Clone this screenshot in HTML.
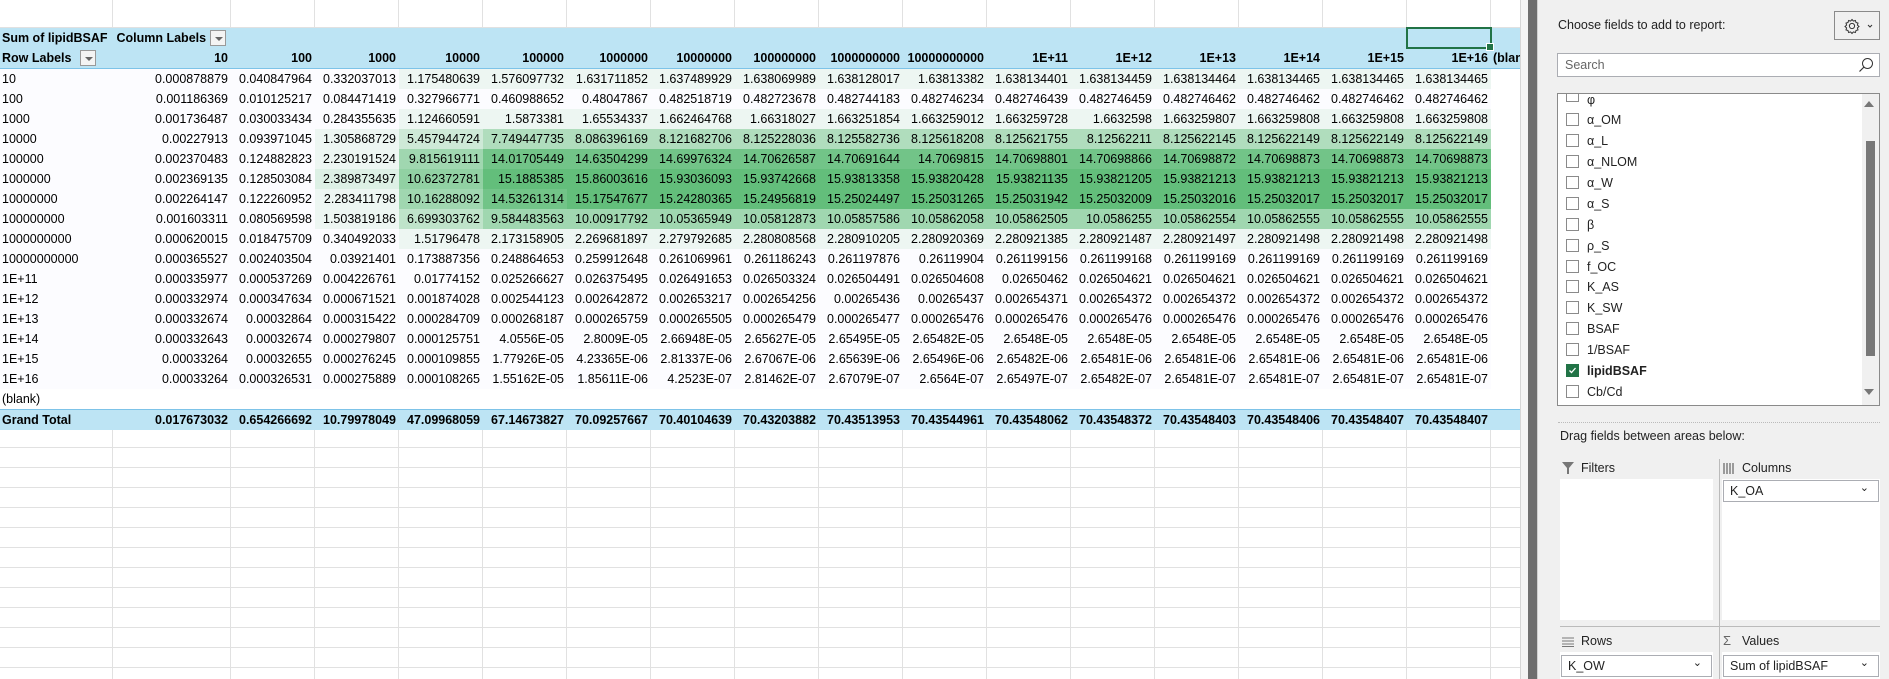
<!DOCTYPE html>
<html><head><meta charset="utf-8">
<style>
*{box-sizing:border-box;margin:0;padding:0}
body{width:1889px;height:679px;overflow:hidden;background:#fff;font-family:"Liberation Sans",sans-serif;position:relative}
#sheet{position:absolute;left:0;top:0;width:1520px;height:679px;overflow:hidden;
background-image:
linear-gradient(#e1e1e1,#e1e1e1),linear-gradient(#e1e1e1,#e1e1e1),
repeating-linear-gradient(90deg,transparent 0 83px,#e1e1e1 83px 84px),
repeating-linear-gradient(180deg,transparent 0 19px,#e1e1e1 19px 20px);
background-size:1px 100%,1px 100%,1289px 100%,100% 679px;
background-position:112px 0,230px 0,231px 0,0 8px;background-repeat:no-repeat,no-repeat,no-repeat,no-repeat}
table{position:absolute;left:0;top:28px;width:1531px;border-collapse:collapse;table-layout:fixed;font-size:12.5px;color:#000}
td{height:20px;padding:0 3px 0 2px;white-space:nowrap;overflow:hidden;text-align:right;background:#fcfcff;line-height:20px}
td:first-child{text-align:left}
tr.h td{background:#bde4f4;font-weight:bold}
tr.h2 td{border-bottom:1px solid #7dc3e8}
tr.bl td{background:#fff}
tr.gt td{background:#bde4f4;font-weight:bold;border-top:1px solid #7dc3e8}
td.w{background:#fff}
.g1{background:#edf6f2}.g2{background:#ddf0e5}.g3{background:#cee9d7}.g4{background:#bfe3ca}.g5{background:#b0ddbd}.g6{background:#a0d7b0}.g7{background:#91d1a3}.g8{background:#82ca95}.g9{background:#72c488}.g10{background:#63be7b}
.dd{display:inline-block;width:16px;height:16px;border:1px solid #999;background:#f4f4f4;vertical-align:middle;position:relative;top:-1px}
.dd:after{content:"";position:absolute;left:4px;top:6px;border-left:4px solid transparent;border-right:4px solid transparent;border-top:4px solid #666}
#sel{position:absolute;left:1406px;top:27px;width:86px;height:22px;border:2px solid #217346}
#sel:after{content:"";position:absolute;right:-4px;bottom:-4px;width:6px;height:6px;background:#217346;border:1px solid #fff}
#gap{position:absolute;left:1520px;top:0;width:8px;height:679px;background:#f3f3f3;border-left:1px solid #d5d5d5}
#bar{position:absolute;left:1528px;top:0;width:9px;height:679px;background:#6e6e6e}
#panel{position:absolute;left:1537px;top:0;width:352px;height:679px;background:#f0f0f0;font-size:12px;color:#222;border-left:1px solid #d0d0d0}
.ab{position:absolute}
.cb{position:absolute;left:8px;width:13px;height:13px;border:1px solid #8a8a8a;background:#fff}
.it{position:absolute;left:29px;font-size:12.5px}
.box{position:absolute;background:#fff;border:1px solid #abadb3}
.drop{position:absolute;background:#fff;border:1px solid #abadb3;height:22px;font-size:12.5px;line-height:20px;padding-left:6px}
.drop:after{content:"⌄";position:absolute;right:9px;top:-3px;font-size:11px}
</style></head><body>
<div id="sheet">
<table>
<colgroup><col style="width:113px"><col style="width:118px"><col span="15" style="width:84px"><col style="width:40px"></colgroup>
<tr class="h"><td>Sum of lipidBSAF</td><td style="text-align:left;padding-left:0;overflow:visible">&nbsp;Column Labels <span class="dd"></span></td><td></td><td></td><td></td><td></td><td></td><td></td><td></td><td></td><td></td><td></td><td></td><td></td><td></td><td></td><td></td><td></td></tr>
<tr class="h h2"><td>Row Labels <span class="dd" style="margin-left:5px"></span></td><td>10</td><td>100</td><td>1000</td><td>10000</td><td>100000</td><td>1000000</td><td>10000000</td><td>100000000</td><td>1000000000</td><td>10000000000</td><td>1E+11</td><td>1E+12</td><td>1E+13</td><td>1E+14</td><td>1E+15</td><td>1E+16</td><td style="text-align:left">(blank)</td></tr>
<tr><td>10</td><td>0.000878879</td><td>0.040847964</td><td>0.332037013</td><td class="g1">1.175480639</td><td class="g1">1.576097732</td><td class="g1">1.631711852</td><td class="g1">1.637489929</td><td class="g1">1.638069989</td><td class="g1">1.638128017</td><td class="g1">1.63813382</td><td class="g1">1.638134401</td><td class="g1">1.638134459</td><td class="g1">1.638134464</td><td class="g1">1.638134465</td><td class="g1">1.638134465</td><td class="g1">1.638134465</td><td class="w"></td></tr>
<tr><td>100</td><td>0.001186369</td><td>0.010125217</td><td>0.084471419</td><td>0.327966771</td><td>0.460988652</td><td>0.48047867</td><td>0.482518719</td><td>0.482723678</td><td>0.482744183</td><td>0.482746234</td><td>0.482746439</td><td>0.482746459</td><td>0.482746462</td><td>0.482746462</td><td>0.482746462</td><td>0.482746462</td><td class="w"></td></tr>
<tr><td>1000</td><td>0.001736487</td><td>0.030033434</td><td>0.284355635</td><td class="g1">1.124660591</td><td class="g1">1.5873381</td><td class="g1">1.65534337</td><td class="g1">1.662464768</td><td class="g1">1.66318027</td><td class="g1">1.663251854</td><td class="g1">1.663259012</td><td class="g1">1.663259728</td><td class="g1">1.6632598</td><td class="g1">1.663259807</td><td class="g1">1.663259808</td><td class="g1">1.663259808</td><td class="g1">1.663259808</td><td class="w"></td></tr>
<tr><td>10000</td><td>0.00227913</td><td>0.093971045</td><td class="g1">1.305868729</td><td class="g3">5.457944724</td><td class="g5">7.749447735</td><td class="g5">8.086396169</td><td class="g5">8.121682706</td><td class="g5">8.125228036</td><td class="g5">8.125582736</td><td class="g5">8.125618208</td><td class="g5">8.125621755</td><td class="g5">8.12562211</td><td class="g5">8.125622145</td><td class="g5">8.125622149</td><td class="g5">8.125622149</td><td class="g5">8.125622149</td><td class="w"></td></tr>
<tr><td>100000</td><td>0.002370483</td><td>0.124882823</td><td class="g1">2.230191524</td><td class="g6">9.815619111</td><td class="g9">14.01705449</td><td class="g9">14.63504299</td><td class="g9">14.69976324</td><td class="g9">14.70626587</td><td class="g9">14.70691644</td><td class="g9">14.7069815</td><td class="g9">14.70698801</td><td class="g9">14.70698866</td><td class="g9">14.70698872</td><td class="g9">14.70698873</td><td class="g9">14.70698873</td><td class="g9">14.70698873</td><td class="w"></td></tr>
<tr><td>1000000</td><td>0.002369135</td><td>0.128503084</td><td class="g2">2.389873497</td><td class="g7">10.62372781</td><td class="g10">15.1885385</td><td class="g10">15.86003616</td><td class="g10">15.93036093</td><td class="g10">15.93742668</td><td class="g10">15.93813358</td><td class="g10">15.93820428</td><td class="g10">15.93821135</td><td class="g10">15.93821205</td><td class="g10">15.93821213</td><td class="g10">15.93821213</td><td class="g10">15.93821213</td><td class="g10">15.93821213</td><td class="w"></td></tr>
<tr><td>10000000</td><td>0.002264147</td><td>0.122260952</td><td class="g1">2.283411798</td><td class="g6">10.16288092</td><td class="g9">14.53261314</td><td class="g10">15.17547677</td><td class="g10">15.24280365</td><td class="g10">15.24956819</td><td class="g10">15.25024497</td><td class="g10">15.25031265</td><td class="g10">15.25031942</td><td class="g10">15.25032009</td><td class="g10">15.25032016</td><td class="g10">15.25032017</td><td class="g10">15.25032017</td><td class="g10">15.25032017</td><td class="w"></td></tr>
<tr><td>100000000</td><td>0.001603311</td><td>0.080569598</td><td class="g1">1.503819186</td><td class="g4">6.699303762</td><td class="g6">9.584483563</td><td class="g6">10.00917792</td><td class="g6">10.05365949</td><td class="g6">10.05812873</td><td class="g6">10.05857586</td><td class="g6">10.05862058</td><td class="g6">10.05862505</td><td class="g6">10.0586255</td><td class="g6">10.05862554</td><td class="g6">10.05862555</td><td class="g6">10.05862555</td><td class="g6">10.05862555</td><td class="w"></td></tr>
<tr><td>1000000000</td><td>0.000620015</td><td>0.018475709</td><td>0.340492033</td><td class="g1">1.51796478</td><td class="g1">2.173158905</td><td class="g1">2.269681897</td><td class="g1">2.279792685</td><td class="g1">2.280808568</td><td class="g1">2.280910205</td><td class="g1">2.280920369</td><td class="g1">2.280921385</td><td class="g1">2.280921487</td><td class="g1">2.280921497</td><td class="g1">2.280921498</td><td class="g1">2.280921498</td><td class="g1">2.280921498</td><td class="w"></td></tr>
<tr><td>10000000000</td><td>0.000365527</td><td>0.002403504</td><td>0.03921401</td><td>0.173887356</td><td>0.248864653</td><td>0.259912648</td><td>0.261069961</td><td>0.261186243</td><td>0.261197876</td><td>0.26119904</td><td>0.261199156</td><td>0.261199168</td><td>0.261199169</td><td>0.261199169</td><td>0.261199169</td><td>0.261199169</td><td class="w"></td></tr>
<tr><td>1E+11</td><td>0.000335977</td><td>0.000537269</td><td>0.004226761</td><td>0.01774152</td><td>0.025266627</td><td>0.026375495</td><td>0.026491653</td><td>0.026503324</td><td>0.026504491</td><td>0.026504608</td><td>0.02650462</td><td>0.026504621</td><td>0.026504621</td><td>0.026504621</td><td>0.026504621</td><td>0.026504621</td><td class="w"></td></tr>
<tr><td>1E+12</td><td>0.000332974</td><td>0.000347634</td><td>0.000671521</td><td>0.001874028</td><td>0.002544123</td><td>0.002642872</td><td>0.002653217</td><td>0.002654256</td><td>0.00265436</td><td>0.00265437</td><td>0.002654371</td><td>0.002654372</td><td>0.002654372</td><td>0.002654372</td><td>0.002654372</td><td>0.002654372</td><td class="w"></td></tr>
<tr><td>1E+13</td><td>0.000332674</td><td>0.00032864</td><td>0.000315422</td><td>0.000284709</td><td>0.000268187</td><td>0.000265759</td><td>0.000265505</td><td>0.000265479</td><td>0.000265477</td><td>0.000265476</td><td>0.000265476</td><td>0.000265476</td><td>0.000265476</td><td>0.000265476</td><td>0.000265476</td><td>0.000265476</td><td class="w"></td></tr>
<tr><td>1E+14</td><td>0.000332643</td><td>0.00032674</td><td>0.000279807</td><td>0.000125751</td><td>4.0556E-05</td><td>2.8009E-05</td><td>2.66948E-05</td><td>2.65627E-05</td><td>2.65495E-05</td><td>2.65482E-05</td><td>2.6548E-05</td><td>2.6548E-05</td><td>2.6548E-05</td><td>2.6548E-05</td><td>2.6548E-05</td><td>2.6548E-05</td><td class="w"></td></tr>
<tr><td>1E+15</td><td>0.00033264</td><td>0.00032655</td><td>0.000276245</td><td>0.000109855</td><td>1.77926E-05</td><td>4.23365E-06</td><td>2.81337E-06</td><td>2.67067E-06</td><td>2.65639E-06</td><td>2.65496E-06</td><td>2.65482E-06</td><td>2.65481E-06</td><td>2.65481E-06</td><td>2.65481E-06</td><td>2.65481E-06</td><td>2.65481E-06</td><td class="w"></td></tr>
<tr><td>1E+16</td><td>0.00033264</td><td>0.000326531</td><td>0.000275889</td><td>0.000108265</td><td>1.55162E-05</td><td>1.85611E-06</td><td>4.2523E-07</td><td>2.81462E-07</td><td>2.67079E-07</td><td>2.6564E-07</td><td>2.65497E-07</td><td>2.65482E-07</td><td>2.65481E-07</td><td>2.65481E-07</td><td>2.65481E-07</td><td>2.65481E-07</td><td class="w"></td></tr>
<tr class="bl"><td>(blank)</td><td></td><td></td><td></td><td></td><td></td><td></td><td></td><td></td><td></td><td></td><td></td><td></td><td></td><td></td><td></td><td></td><td></td></tr>
<tr class="gt"><td>Grand Total</td><td>0.017673032</td><td>0.654266692</td><td>10.79978049</td><td>47.09968059</td><td>67.14673827</td><td>70.09257667</td><td>70.40104639</td><td>70.43203882</td><td>70.43513953</td><td>70.43544961</td><td>70.43548062</td><td>70.43548372</td><td>70.43548403</td><td>70.43548406</td><td>70.43548407</td><td>70.43548407</td><td></td></tr>
</table>
<div id="sel"></div>
</div>
<div id="gap"></div><div id="bar"></div>
<div id="panel">
<div class="ab" style="left:20px;top:18px;font-size:12.5px">Choose fields to add to report:</div>
<div class="ab" style="left:296px;top:11px;width:46px;height:29px;border:1px solid #8a8a8a;background:#f0f0f0">
<svg width="46" height="29" viewBox="0 0 46 29" style="position:absolute;left:0;top:0"><g fill="none" stroke="#333" stroke-width="1"><circle cx="17" cy="14" r="2.6"/><path d="M17 7.5l1.4 1.6 2-.6.6 2 2 .6-.6 2 1.6 1.4-1.6 1.4.6 2-2 .6-.6 2-2-.6L17 21.5l-1.4-1.6-2 .6-.6-2-2-.6.6-2L10 14.5l1.6-1.4-.6-2 2-.6.6-2 2 .6z"/><path d="M33 13l2 2 2-2"/></g></svg></div>
<div class="box" style="left:19px;top:53px;width:323px;height:24px;font-size:12.5px;line-height:22px;padding-left:7px;color:#666">Search
<svg width="16" height="16" viewBox="0 0 16 16" style="position:absolute;right:5px;top:3px"><circle cx="9.5" cy="6.5" r="5" fill="none" stroke="#333"/><path d="M6 10L1.5 14.5" stroke="#333" stroke-width="1.2"/></svg></div>
<div class="box" style="left:19px;top:93px;width:323px;height:313px;overflow:hidden;border-color:#8a8a8a">
<div class="ab" style="right:0;top:0;width:17px;height:100%;background:#f0f0f0"></div>
<div class="ab" style="right:5px;top:7px;border-left:5px solid transparent;border-right:5px solid transparent;border-bottom:6px solid #777;width:0"></div>
<div class="ab" style="right:4px;top:47px;width:9px;height:215px;background:#777"></div>
<div class="ab" style="right:5px;top:295px;border-left:5px solid transparent;border-right:5px solid transparent;border-top:6px solid #777;width:0"></div>
<div class="cb" style="top:-5px"></div><div class="it" style="top:-1px">φ</div>
<div class="cb" style="top:19px"></div><div class="it" style="top:19px">α_OM</div>
<div class="cb" style="top:40px"></div><div class="it" style="top:40px">α_L</div>
<div class="cb" style="top:61px"></div><div class="it" style="top:61px">α_NLOM</div>
<div class="cb" style="top:82px"></div><div class="it" style="top:82px">α_W</div>
<div class="cb" style="top:103px"></div><div class="it" style="top:103px">α_S</div>
<div class="cb" style="top:124px"></div><div class="it" style="top:124px">β</div>
<div class="cb" style="top:145px"></div><div class="it" style="top:145px">ρ_S</div>
<div class="cb" style="top:166px"></div><div class="it" style="top:166px">f_OC</div>
<div class="cb" style="top:186px"></div><div class="it" style="top:186px">K_AS</div>
<div class="cb" style="top:207px"></div><div class="it" style="top:207px">K_SW</div>
<div class="cb" style="top:228px"></div><div class="it" style="top:228px">BSAF</div>
<div class="cb" style="top:249px"></div><div class="it" style="top:249px">1/BSAF</div>
<div class="cb" style="top:270px;background:#217346;border-color:#217346"><svg width="11" height="11" viewBox="0 0 11 11" style="position:absolute;left:0;top:0"><path d="M2.5 5.5l2 2 4-4.5" fill="none" stroke="#fff" stroke-width="1.3"/></svg></div><div class="it" style="top:270px;font-weight:bold">lipidBSAF</div>
<div class="cb" style="top:291px"></div><div class="it" style="top:291px">Cb/Cd</div>
</div>
<div class="ab" style="left:20px;top:422px;width:322px;border-top:1px dotted #bbb"></div>
<div class="ab" style="left:22px;top:429px;font-size:12.5px">Drag fields between areas below:</div>
<svg class="ab" style="left:24px;top:462px" width="12" height="12" viewBox="0 0 12 12"><path d="M0 0h12L7 6v6H5V6z" fill="#777"/></svg>
<div class="ab" style="left:43px;top:461px;font-size:12.5px">Filters</div>
<div class="ab" style="left:22px;top:479px;width:153px;height:141px;background:#fff"></div>
<div class="ab" style="left:181px;top:459px;width:1px;height:220px;background:#bbb"></div>
<div class="ab" style="left:22px;top:626px;width:320px;height:1px;background:#bbb"></div>
<svg class="ab" style="left:185px;top:463px" width="12" height="11"><path d="M1 0v11M4 0v11M7 0v11M10 0v11" stroke="#777" stroke-width="1.4"/></svg>
<div class="ab" style="left:204px;top:461px;font-size:12.5px">Columns</div>
<div class="ab" style="left:184px;top:479px;width:158px;height:141px;background:#fff"></div>
<div class="drop" style="left:185px;top:480px;width:156px">K_OA</div>
<svg class="ab" style="left:24px;top:637px" width="12" height="10"><path d="M0 1h12M0 4h12M0 7h12M0 9.5h12" stroke="#777" stroke-width="1"/></svg>
<div class="ab" style="left:43px;top:634px;font-size:12.5px">Rows</div>
<div class="ab" style="left:185px;top:633px;font-size:13px;color:#666">Σ</div>
<div class="ab" style="left:204px;top:634px;font-size:12.5px">Values</div>
<div class="ab" style="left:22px;top:652px;width:153px;height:27px;background:#fff"></div>
<div class="ab" style="left:184px;top:652px;width:158px;height:27px;background:#fff"></div>
<div class="drop" style="left:23px;top:655px;width:151px">K_OW</div>
<div class="drop" style="left:185px;top:655px;width:156px">Sum of lipidBSAF</div>
</div>
</body></html>
